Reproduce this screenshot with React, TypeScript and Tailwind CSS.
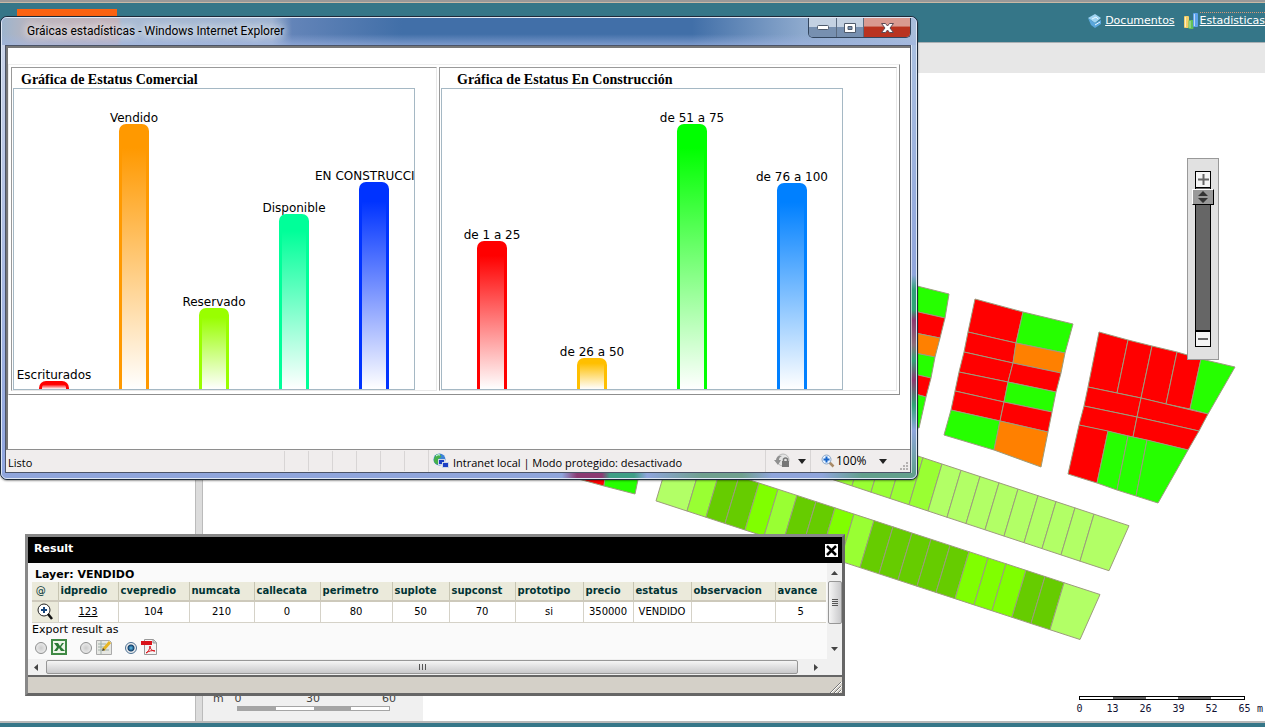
import type { ReactNode } from "react";

const LIGHT = "#b2ff66";
const MID = "#99ff33";
const BRIGHT = "#80ff00";
const DARK = "#66cc00";
const RED = "#ff0000";
const GREEN = "#26ff00";
const ORANGE = "#ff8000";

type Bar = { label: string; height: number; color: string };

const commercialBars: Bar[] = [
    { label: "Escriturados", height: 8, color: "#ff0000" },
    { label: "Vendido", height: 265, color: "#ff9900" },
    { label: "Reservado", height: 81, color: "#99ff00" },
    { label: "Disponible", height: 175, color: "#00ff99" },
    { label: "EN CONSTRUCCION", height: 207, color: "#0033ff" },
];

const constructionBars: Bar[] = [
    { label: "de 1 a 25", height: 148, color: "#ff0000" },
    { label: "de 26 a 50", height: 31, color: "#ffbf00" },
    { label: "de 51 a 75", height: 265, color: "#00ff00" },
    { label: "de 76 a 100", height: 206, color: "#0080ff" },
];

const columns = [
    { name: "idpredio", value: "123", width: "w-[60px]" },
    { name: "cvepredio", value: "104", width: "w-[71px]" },
    { name: "numcata", value: "210", width: "w-[65px]" },
    { name: "callecata", value: "0", width: "w-[66px]" },
    { name: "perimetro", value: "80", width: "w-[72px]" },
    { name: "suplote", value: "50", width: "w-[57px]" },
    { name: "supconst", value: "70", width: "w-[66px]" },
    { name: "prototipo", value: "si", width: "w-[68px]" },
    { name: "precio", value: "350000", width: "w-[50px]" },
    { name: "estatus", value: "VENDIDO", width: "w-[58px]" },
    { name: "observacion", value: "", width: "w-[84px]" },
    { name: "avance", value: "5", width: "w-[51px]" },
];

// ---- map ----

const lots: [string, string][] = [
    // west block
    [GREEN, "905,283 949,294 945,318 905,309"],
    [RED, "905,309 945,318 940,338 905,331"],
    [ORANGE, "905,331 940,338 935,357 905,351"],
    [GREEN, "905,351 935,357 931,378 905,372"],
    [RED, "905,372 931,378 926,397 905,391"],
    [GREEN, "905,391 926,397 919,428 905,424"],
    // centre block, left column
    [RED, "975,299 1023,312 1016,343 968,332"],
    [RED, "968,332 1016,343 1013,363 964,352"],
    [RED, "964,352 1013,363 1008,382 959,372"],
    [RED, "959,372 1008,382 1004,402 955,391"],
    [RED, "955,391 1004,402 1000,421 951,410"],
    [GREEN, "951,410 1000,421 994,450 944,435"],
    // centre block, right column
    [GREEN, "1023,312 1073,324 1065,353 1016,343"],
    [ORANGE, "1016,343 1065,353 1061,373 1013,363"],
    [RED, "1013,363 1061,373 1056,392 1008,382"],
    [GREEN, "1008,382 1056,392 1052,412 1004,402"],
    [RED, "1004,402 1052,412 1048,432 1000,421"],
    [ORANGE, "1000,421 1048,432 1041,467 994,450"],
    // east block
    [RED, "1099,332 1128,340 1117,393 1088,387"],
    [RED, "1128,340 1152,346 1141,398 1117,393"],
    [RED, "1152,346 1177,352 1166,404 1141,398"],
    [RED, "1177,352 1201,359 1190,409 1166,404"],
    [GREEN, "1201,359 1235,367 1208,414 1190,409"],
    [RED, "1088,387 1141,398 1137,417 1084,406"],
    [RED, "1141,398 1208,414 1199,431 1137,417"],
    [RED, "1084,406 1137,417 1133,437 1079,425"],
    [RED, "1137,417 1199,431 1188,450 1133,437"],
    [RED, "1079,425 1108,431 1097,483 1068,474"],
    [GREEN, "1108,431 1128,436 1117,490 1097,483"],
    [GREEN, "1128,436 1147,440 1136,496 1117,490"],
    [GREEN, "1147,440 1188,450 1158,503 1136,496"],
    // south west remainder
    [RED, "560,474 606,470 604,486"],
    [GREEN, "606,470 640,470 635,494 604,486"],
];

const northStrip = {
    x: [809, 828, 847, 866, 885, 904, 923, 942, 961, 980, 999, 1018, 1038, 1056, 1075, 1094, 1129],
    fill: [MID, MID, MID, MID, MID, MID, MID, LIGHT, LIGHT, LIGHT, LIGHT, LIGHT, LIGHT, LIGHT, LIGHT, LIGHT],
    top: (x: number) => 464 + (x - 942) * 0.33,
};

const southStrip = {
    x: [670, 701, 720, 739, 759, 778, 797, 816, 835, 854, 874, 893, 912, 931, 950, 969, 988, 1006, 1026, 1045, 1064, 1100],
    fill: [
        LIGHT, MID, DARK, DARK, BRIGHT, MID, DARK, DARK, BRIGHT, MID, DARK,
        DARK, DARK, DARK, DARK, BRIGHT, BRIGHT, BRIGHT, DARK, DARK, LIGHT,
    ],
    top: (x: number) => 483 + (x - 759) * 0.327,
};

const Strip = ({ strip }: { strip: typeof northStrip }) => {
    const last = strip.x.length - 1;
    const corner = (i: number) => {
        const x = strip.x[i];
        const y = strip.top(x);
        return i === last ? `${x - 20},${y + 45}` : `${x - 14},${y + 47}`;
    };
    return (
        <>
            {strip.fill.map((fill, i) => (
                <polygon
                    key={i}
                    fill={fill}
                    points={`${strip.x[i]},${strip.top(strip.x[i])} ${strip.x[i + 1]},${strip.top(strip.x[i + 1])} ${corner(i + 1)} ${corner(i)}`}
                />
            ))}
        </>
    );
};

const ParcelMap = () => (
    <svg className="absolute left-0 top-0" width="1062" height="648" viewBox="203 73 1062 648" aria-hidden="true">
        <g stroke="#9c9c7c" strokeWidth="1">
            {lots.map(([fill, points]) => (
                <polygon key={points} fill={fill} points={points} />
            ))}
            <Strip strip={northStrip} />
            <Strip strip={southStrip} />
        </g>
    </svg>
);

const ZoomSlider = () => (
    <div className="absolute right-[46px] top-[85px] flex w-8 flex-col items-center border border-[#999] bg-[#e1e1e1] py-3">
        <button aria-label="Acercar" className="flex h-[17px] w-4 shrink-0 items-center justify-center border border-black bg-[#f4f4f4]">
            <svg width="11" height="11" viewBox="0 0 11 11"><path d="M0 5.5h11M5.5 0v11" stroke="#666" strokeWidth="2" /></svg>
        </button>
        <div className="relative flex h-[142px] w-4 justify-center border-x border-black bg-[#666] pt-[5px]">
            <input
                type="range"
                aria-label="Nivel de zoom"
                defaultValue={0}
                className="-mx-1 h-[137px] w-[22px] shrink-0 appearance-none bg-transparent [writing-mode:vertical-lr] [&::-webkit-slider-thumb]:h-4 [&::-webkit-slider-thumb]:w-[22px] [&::-webkit-slider-thumb]:appearance-none [&::-webkit-slider-thumb]:border [&::-webkit-slider-thumb]:border-b-black [&::-webkit-slider-thumb]:border-l-white [&::-webkit-slider-thumb]:border-r-black [&::-webkit-slider-thumb]:border-t-white [&::-webkit-slider-thumb]:bg-[#999]"
            />
            <svg className="pointer-events-none absolute left-px top-[3px]" width="12" height="12" viewBox="0 0 12 12">
                <path d="M6 0l5 5H1zM6 12l5-5H1z" fill="#333" />
            </svg>
        </div>
        <button aria-label="Alejar" className="flex h-[17px] w-4 shrink-0 items-center justify-center border border-t-2 border-black bg-[#f4f4f4]">
            <svg width="10" height="10" viewBox="0 0 10 10"><path d="M0 5h10" stroke="#666" strokeWidth="2" /></svg>
        </button>
    </div>
);

const MapScales = () => (
    <div className="relative flex items-end justify-between">
        <div className="flex h-[61px] w-[220px] flex-col justify-end bg-[#f0f0f0] pb-2.5 pl-2.5 text-[11px] leading-[14px] text-[#444]">
            <div className="flex">
                <span className="w-3">m</span>
                <span className="w-[26px] text-center">0</span>
                <span className="w-[124px] text-center">30</span>
                <span className="w-7 text-center">60</span>
            </div>
            <div className="ml-6 flex h-[5px] w-[153px] border border-[#a5a5a5]">
                <span className="flex-1 bg-[#a5a5a5]" />
                <span className="flex-1 bg-white" />
                <span className="flex-1 bg-[#a5a5a5]" />
                <span className="flex-1 bg-white" />
            </div>
        </div>
        <div className="flex flex-col gap-0.5 pb-[5px] font-['DejaVu_Sans_Mono',monospace] text-[10px] leading-[14px] text-[#111133]">
            <div className="ml-4 flex h-1 w-[166px] border border-black">
                {["bg-white", "bg-[#666]", "bg-white", "bg-[#666]", "bg-white"].map((fill, i) => (
                    <span key={i} className={`flex-1 ${fill}`} />
                ))}
            </div>
            <div className="flex">
                {[0, 13, 26, 39, 52, 65].map((mark) => (
                    <span key={mark} className="w-[33px] text-center">{mark}</span>
                ))}
                <span className="-ml-1 w-2">m</span>
            </div>
        </div>
    </div>
);

// ---- charts window ----

const Chart = ({ title, bars, className, indent }: { title: string; bars: Bar[]; className: string; indent: string }) => (
    <section className={`border border-b-[#e8e8e8] border-l-[#999] border-r-[#e8e8e8] border-t-[#999] px-px ${className}`}>
        <h2 className={`h-5 font-['Liberation_Serif',serif] text-[14px] font-bold leading-6 ${indent}`}>{title}</h2>
        <div className="flex h-[302px] w-[402px] items-end overflow-hidden border border-[#a5b8c4]">
            {bars.map((bar) => (
                <div key={bar.label} className="flex w-0 flex-1 flex-col items-center">
                    <span className="whitespace-nowrap text-[12px] leading-3">{bar.label}</span>
                    <div
                        className="w-[30px] rounded-t-[7px] border-x-[3px] border-t-[3px]"
                        style={{
                            height: bar.height,
                            borderColor: bar.color,
                            background: `linear-gradient(${bar.color}, ${bar.color} 8%, #fff)`,
                        }}
                    />
                </div>
            ))}
        </div>
    </section>
);

const CaptionButtons = () => (
    <div className="mr-[5px] flex h-5 overflow-hidden rounded-b-[5px] border border-t-0 border-[#33465e]">
        <button aria-label="Minimizar" className="flex w-7 items-center justify-center border-r border-[#5b6b80] bg-linear-to-b from-[#c3d1e2] from-45% to-[#7790b0] to-50%">
            <svg width="12" height="5" viewBox="0 0 12 5"><rect x=".5" y=".5" width="11" height="4" rx="1" fill="#fff" stroke="#4f5b6c" /></svg>
        </button>
        <button aria-label="Maximizar" className="flex w-[27px] items-center justify-center border-r border-[#5b6b80] bg-linear-to-b from-[#c3d1e2] from-45% to-[#7790b0] to-50%">
            <svg width="12" height="10" viewBox="0 0 12 10">
                <path d="M.5.5h11v9H.5zM4 3.5v3h4v-3z" fill="#fff" fillRule="evenodd" stroke="#4f5b6c" />
            </svg>
        </button>
        <button aria-label="Cerrar" className="flex w-[46px] items-center justify-center bg-linear-to-b from-[#d99a91] from-40% to-[#b93320] to-50%">
            <svg width="13" height="10" viewBox="0 0 13 10">
                <path d="M.5.5h4l2 2.5 2-2.5h4L9 5l3.5 4.5h-4l-2-2.5-2 2.5h-4L4 5z" fill="#fff" stroke="#5c4a55" />
            </svg>
        </button>
    </div>
);

const Caret = () => (
    <svg width="8" height="5" viewBox="0 0 8 5"><path d="M0 0h8L4 5z" fill="#222" /></svg>
);

const StatusBar = () => (
    <footer className="flex h-[22px] items-center bg-[#f0eded] text-[11px]">
        <span className="w-[278px] pl-0.5 pt-1 font-['Open_Sans','Noto_Sans',sans-serif]">Listo</span>
        {[0, 1, 2, 3, 4, 5].map((slot) => (
            <span key={slot} className="h-5 w-6 border-l border-[#d8d5d5]" />
        ))}
        <div className="flex h-full flex-1 items-center gap-1 border-l border-[#d8d5d5] pl-1 font-['Open_Sans','Noto_Sans',sans-serif]">
            <svg width="16" height="16" viewBox="0 0 16 16">
                <circle cx="6.5" cy="6.5" r="6" fill="#3d83d6" />
                <path d="M2 3c3-3 5-2 6 0S5 5 5 7s3 2 2 5C3 12 0 9 1 6z" fill="#46b04b" />
                <path d="M3 3q2-2 4-1" stroke="#dff" fill="none" />
                <rect x="5.5" y="6.5" width="6" height="5" fill="#1c3fc4" stroke="#cdd7e8" />
                <rect x="9.5" y="9.5" width="6" height="5" fill="#1c3fc4" stroke="#cdd7e8" />
            </svg>
            <span className="whitespace-nowrap pt-1">Intranet local | Modo protegido: desactivado</span>
        </div>
        <button aria-label="Seguridad" className="flex h-full w-[45px] items-center gap-2 border-l border-[#d8d5d5] pl-2">
            <svg width="16" height="16" viewBox="0 0 16 16">
                <circle cx="9" cy="7" r="6" fill="#e4e4e4" stroke="#b9b9b9" />
                <path d="M0 7l4 5 3-5H5q0-3 3-4-5-1-6 4z" fill="#909090" />
                <rect x="8" y="8" width="7" height="6" fill="#777" />
                <path d="M9.5 8V6q2-2 4 0v2" fill="none" stroke="#777" strokeWidth="1.5" />
            </svg>
            <Caret />
        </button>
        <button className="flex h-full w-[100px] items-center border-l border-[#d8d5d5] pl-2.5 font-['Open_Sans','Noto_Sans',sans-serif] text-[12px]">
            <svg width="14" height="14" viewBox="0 0 14 14">
                <path d="M8.5 8.5l4 4" stroke="#a98b68" strokeWidth="2.5" />
                <circle cx="5.5" cy="5.5" r="4.5" fill="#e8f3ff" stroke="#8aa5c6" />
                <path d="M5.5 2.5v6M2.5 5.5h6" stroke="#1764c8" strokeWidth="2" />
            </svg>
            <span className="w-11 pl-px text-left">100%</span>
            <Caret />
            <svg className="ml-3 self-end" width="10" height="10" viewBox="0 0 10 10">
                <path d="M7 1h2M4 4h2M7 4h2M1 7h2M4 7h2M7 7h2" stroke="#b5b2b2" strokeWidth="2" />
            </svg>
        </button>
    </footer>
);

const ChartsWindow = () => (
    <div className="absolute left-0 top-4 w-[918px] rounded-[7px] border border-[#1d2a3a] bg-[#8fa5dc] shadow-[0_1px_2px_rgba(0,0,0,0.4)]">
        <div className="overflow-hidden rounded-[6px] border border-[#dfe8f5]">
            <header className="flex h-[27px] items-start justify-between bg-[linear-gradient(to_bottom,transparent_60%,rgba(160,180,225,0.6)),linear-gradient(to_right,#9db4cd_0px,#bcb5bd_30px,#c3b4bd_115px,#a9bbd3_120px,#9fb4d2_270px,#6384b8_290px,#416fa8_400px,#416fa8_690px,#8da9cd_800px,#a9bedb)]">
                <h1 className="pl-[25px] font-['Roboto',sans-serif] text-[12px] leading-[26px] [text-shadow:0_0_8px_#fff,0_0_10px_#fff]">
                    Gráicas estadísticas - Windows Internet Explorer
                </h1>
                <CaptionButtons />
            </header>
            <div className="flex">
                <div className="w-[3px] bg-linear-to-b from-[#c9d3e8] to-[#8fa5e0]" />
                <div className="min-w-0 flex-1 border border-[#4b5468]">
                    <div className="h-[404px] border-b border-l-2 border-t-2 border-b-[#8e8e8e] border-l-[#777] border-t-[#777] bg-white pr-2.5 pt-4">
                        <div className="flex gap-0.5 border border-b-[#8e8e8e] border-l-[#eee] border-r-[#8e8e8e] border-t-[#eee] p-0.5 pb-[3px]">
                            <Chart title="Gráfica de Estatus Comercial" bars={commercialBars} className="w-[426px]" indent="pl-2" />
                            <Chart title="Gráfica de Estatus En Construcción" bars={constructionBars} className="flex-1" indent="pl-4" />
                        </div>
                    </div>
                    <StatusBar />
                </div>
                <div className="w-[5px] border-l border-white/60 bg-[linear-gradient(to_bottom,#a9bfe0_0px,#8fa5dc_230px,#2fa377_245px,#2fa377_265px,#8b3a72_275px,#8a6f7a_300px,#2fa377_315px,#8b3a72_335px,#2fa377_360px,#8fa5dc_385px,#5fa08e)]" />
            </div>
            <div className="h-[5px] bg-[linear-gradient(to_right,#8fa5dc_560px,#8b3a72_575px,#8b3a72_600px,#3f9f86_608px,#3f9f86_632px,#8fa5dc_645px,#6fa08e_700px,#6fa08e_740px,#8fa5dc_770px,#8fa5dc_820px,#62a08c_860px)]" />
        </div>
    </div>
);

// ---- result window ----

const ExportOption = ({ value, label, checked, children }: { value: string; label: string; checked?: boolean; children: ReactNode }) => (
    <label className="flex w-[45px] items-center gap-1">
        <input
            type="radio"
            name="export"
            value={value}
            aria-label={label}
            defaultChecked={checked}
            className="mt-0.5 size-3 shrink-0 appearance-none rounded-full border border-[#8e8f8f] bg-[radial-gradient(circle,#ccc,#f4f4f4)] checked:border-[#4b6f92] checked:bg-[radial-gradient(circle,#5fc4f0_0px,#123f6b_3px,#eee_4px)]"
        />
        {children}
    </label>
);

const ResultTable = () => (
    <table className="w-[794px] table-fixed border-collapse text-center text-[10px] text-black">
        <thead>
            <tr className="h-[19px] border-b-2 border-[#cdc9bb] bg-[#ebeadb] text-[#003333]">
                <th className="w-[26px] border-r border-[#c7c5b2] pr-2 font-normal leading-4">@</th>
                {columns.map((col) => (
                    <th key={col.name} className={`overflow-hidden border-r border-[#c7c5b2] pl-0.5 text-left leading-4 font-bold whitespace-nowrap last:border-r-0 ${col.width}`}>
                        {col.name}
                    </th>
                ))}
            </tr>
        </thead>
        <tbody>
            <tr className="h-[21px] border-b border-[#d5d2c8] bg-white">
                <td className="border-r border-[#d5d2c8] bg-[#ebeadb]">
                    <button aria-label="Ver en el mapa" className="block pl-1">
                        <svg width="18" height="17" viewBox="0 0 18 17">
                            <circle cx="8" cy="7" r="6" fill="#fff" stroke="#222" />
                            <path d="M8 4v6M5 7h6" stroke="#17457a" strokeWidth="2" />
                            <path d="M12 11l4 5" stroke="#111" strokeWidth="2.5" />
                        </svg>
                    </button>
                </td>
                {columns.map((col) => (
                    <td key={col.name} className="border-r border-[#d5d2c8] last:border-r-0">
                        {col.name === "idpredio" ? <a href="#123" className="underline">{col.value}</a> : col.value}
                    </td>
                ))}
            </tr>
        </tbody>
    </table>
);

const ResultWindow = () => (
    <div className="absolute left-[25px] top-[534px] w-[820px] border-[3px] border-b-[#666] border-l-[#888] border-r-[#666] border-t-[#888] bg-[#fafafa]">
        <header className="flex h-[26px] items-center justify-between bg-black pl-1.5 pr-1">
            <h2 className="pb-0.5 text-[11px] font-bold text-white">Result</h2>
            <button aria-label="Cerrar resultado" className="bg-white">
                <svg width="13" height="13" viewBox="0 0 13 13"><path d="M2 2l9 9M11 2l-9 9" stroke="#000" strokeWidth="2.5" /></svg>
            </button>
        </header>
        <div className="flex h-24">
            <div className="min-w-0 flex-1 overflow-hidden pl-1 pt-1">
                <p className="pl-[3px] text-[11px] font-bold leading-[15px]">Layer: VENDIDO</p>
                <ResultTable />
                <fieldset>
                    <legend className="text-[11px] leading-[13px]">Export result as</legend>
                    <div className="flex pl-[3px] pt-[3px]">
                        <ExportOption value="xls" label="Excel">
                            <svg width="16" height="16" viewBox="0 0 16 16">
                                <path d="M1 1h14v14H1z" fill="#eef6ea" stroke="#3f8a45" strokeWidth="2" />
                                <path d="M3 4h4l2 3 2-3h2l-3 4 4 4h-4l-2-3-2 3H3l3-4z" fill="#2b7a35" />
                            </svg>
                        </ExportOption>
                        <ExportOption value="txt" label="Texto">
                            <svg width="16" height="16" viewBox="0 0 16 16">
                                <path d="M.5 1.5h13l2 2v12H.5z" fill="#e6e7e3" stroke="#aaa" />
                                <path d="M2 5h8M2 8h6M2 11h11M5 2v13" stroke="#9fb0a8" />
                                <path d="M14 3L7 11" stroke="#e6b422" strokeWidth="3" />
                                <path d="M7 9l2 2-3 1z" fill="#444" />
                            </svg>
                        </ExportOption>
                        <ExportOption value="pdf" label="PDF" checked>
                            <svg width="16" height="16" viewBox="0 0 16 16">
                                <path d="M3.5.5h9l3 3v12h-12z" fill="#f5f5f5" stroke="#999" />
                                <path d="M12 .5V4h3.5" fill="#ccc" stroke="#999" />
                                <path d="M0 2h11v4H0z" fill="#d9131a" />
                                <path d="M5 14c2-1 4-4 4-7 0 3 2 5 5 5-3-1-6 0-9 2z" fill="none" stroke="#d9131a" />
                            </svg>
                        </ExportOption>
                    </div>
                </fieldset>
            </div>
            <div className="flex w-[15px] flex-col items-center bg-[#f0f0f0]">
                <svg className="mt-2 shrink-0" width="7" height="4" viewBox="0 0 7 4"><path d="M0 4l3.5-4L7 4z" fill="#444" /></svg>
                <div className="mt-1.5 flex h-[43px] w-3.5 flex-col items-center justify-center gap-px rounded-xs border border-[#979797] bg-linear-to-r from-[#f5f5f5] to-[#c9c9cb]">
                    <span className="h-px w-1.5 bg-[#555]" />
                    <span className="h-px w-1.5 bg-[#555]" />
                    <span className="h-px w-1.5 bg-[#555]" />
                    <span className="h-px w-1.5 bg-[#555]" />
                </div>
                <svg className="mb-2 mt-auto shrink-0" width="7" height="4" viewBox="0 0 7 4"><path d="M0 0h7L3.5 4z" fill="#444" /></svg>
            </div>
        </div>
        <div className="flex h-4 items-center bg-[#f0f0f0] pr-6">
            <svg className="mx-1.5 shrink-0" width="4" height="7" viewBox="0 0 4 7"><path d="M4 0v7L0 3.5z" fill="#444" /></svg>
            <div className="ml-0.5 flex h-3.5 flex-1 items-center justify-center gap-0.5 rounded-xs border border-[#979797] bg-linear-to-b from-[#f5f5f5] to-[#c9c9cb]">
                <span className="h-1.5 w-px bg-[#555]" />
                <span className="h-1.5 w-px bg-[#555]" />
                <span className="h-1.5 w-px bg-[#555]" />
            </div>
            <svg className="ml-4 shrink-0" width="4" height="7" viewBox="0 0 4 7"><path d="M0 0v7l4-3.5z" fill="#444" /></svg>
        </div>
        <footer className="flex h-[18px] items-end justify-end border-t-2 border-[#666] bg-[#d4d0c8]">
            <svg width="13" height="12" viewBox="0 0 13 12">
                <path d="M1 12L12 1M5 12l7-7M9 12l3-3" stroke="#777" />
                <path d="M2 12L13 1M6 12l7-7M10 12l3-3" stroke="#fff" />
            </svg>
        </footer>
    </div>
);

const TopBar = () => (
    <>
        <div className="h-[3px] border-b border-[#c9b9a5] bg-[#999]" />
        <header className="flex h-[39px] justify-between overflow-hidden bg-[#357688]">
            <div className="ml-[17px] mt-1.5 w-[100px] bg-[#fb6211]" />
            <nav className="flex gap-2 pt-2 text-[11px] text-white">
                <a href="#documentos" className="flex h-5 items-center gap-1 underline">
                    <svg width="13" height="14" viewBox="0 0 13 14">
                        <path d="M0 4l7-4 6 4-6 5z" fill="#9fd4f3" />
                        <path d="M0 4l7 5 6-3v4l-6 4-4-3z" fill="#5ba7dc" />
                        <path d="M4 5l4-2 2 2M7 11l5-3" stroke="#eaf8ff" fill="none" />
                    </svg>
                    Documentos
                </a>
                <a href="#estadisticas" className="flex h-5 items-center underline">
                    <svg className="mr-px" width="16" height="16" viewBox="0 0 16 16">
                        <rect x="1" y="3" width="5" height="12" rx="1" fill="#f4cf68" />
                        <rect x="5.5" y="7" width="5" height="9" rx="1" fill="#63bf57" />
                        <rect x="10" y="0" width="5" height="14" rx="1" fill="#5da2ec" />
                        <path d="M2.5 4v10M7 8v7M11.5 1v12" stroke="#fff" strokeOpacity=".6" />
                    </svg>
                    <span className="border-t border-dotted border-[#d79a78]">Estadisticas</span>
                </a>
            </nav>
        </header>
        <div className="h-[31px] border-t border-[#aab0b4] bg-[#e7e7e7]" />
    </>
);

const App = () => (
    <div className="relative flex min-h-screen flex-col overflow-hidden bg-white font-['DejaVu_Sans',sans-serif] text-black">
        <TopBar />
        <main className="flex flex-1">
            <aside className="w-[195px] shrink-0" />
            <div className="w-2 shrink-0 border-x border-[#bbb] bg-[#dcdcdc]" />
            <div className="relative flex min-w-0 flex-1 flex-col justify-end">
                <ParcelMap />
                <MapScales />
                <ZoomSlider />
            </div>
        </main>
        <div className="h-1.5 border-t-2 border-[#b8b8b8] bg-[#357688]" />
        <ChartsWindow />
        <ResultWindow />
    </div>
);

export default App;
